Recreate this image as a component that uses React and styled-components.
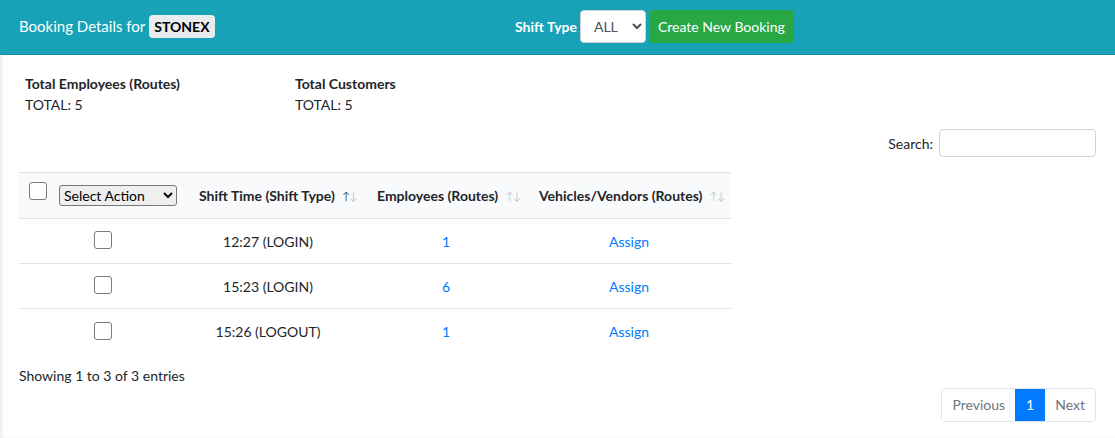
import styled, { createGlobalStyle } from "styled-components";

const GlobalStyle = createGlobalStyle`
  body {
    margin: 0;
    background: #fff;
    color: #212529;
    font-family: Lato, "Noto Sans", sans-serif;
  }
`;

const Header = styled.header`
  display: flex;
  align-items: center;
  height: 52px;
  padding: 0 0 2px 19px;
  background: #17a2b8;
  border-bottom: 1px solid #138d9f;
`;

const Title = styled.div`
  width: 496px;
  display: flex;
  align-items: center;
  gap: 4px;
  color: #fff;
  font-size: 15px;
`;

const Badge = styled.span`
  background: #e9ecef;
  color: #000;
  font-weight: 700;
  font-size: 14px;
  padding: 3px 5px;
  border-radius: 4px;
`;

const Controls = styled.div`
  display: flex;
  align-items: center;
  gap: 3px;
`;

const ControlLabel = styled.label`
  color: #fff;
  font-weight: 700;
  font-size: 14px;
`;

const ShiftSelect = styled.select`
  width: 66px;
  height: 33px;
  padding-left: 9px;
  border: 1px solid #ced4da;
  border-radius: 4px;
  background: #fff;
  color: #495057;
  font-family: inherit;
  font-size: 14px;
`;

const PrimaryButton = styled.button`
  height: 33px;
  padding: 0 9px;
  border: none;
  border-radius: 4px;
  background: #28a745;
  color: #fff;
  font-family: inherit;
  font-size: 14px;
`;

const Content = styled.main`
  padding: 18px 19px 16px;
  box-shadow: inset 3px 0 4px -2px rgba(0, 0, 0, 0.12);
`;

const Stats = styled.div`
  display: flex;
  padding-left: 6px;
`;

const Stat = styled.div`
  width: 270px;
  font-size: 14px;
  line-height: 21px;
`;

const StatTitle = styled.div`
  font-weight: 700;
`;

const SearchRow = styled.div`
  display: flex;
  justify-content: flex-end;
  align-items: center;
  gap: 6px;
  margin-top: 14px;
  font-size: 14px;
`;

const SearchInput = styled.input`
  box-sizing: border-box;
  width: 157px;
  height: 28px;
  border: 1px solid #ced4da;
  border-radius: 4px;
`;

const Table = styled.table`
  width: 712px;
  margin-top: 15px;
  table-layout: fixed;
  border-collapse: collapse;
  font-size: 14px;
`;

const HeadCell = styled.th`
  box-sizing: border-box;
  height: 46px;
  padding: 0 0 0 ${(p) => (p.$pl === undefined ? 12 : p.$pl)}px;
  width: ${(p) => p.$w}px;
  background: #f9fafb;
  border-top: 1px solid #dee2e6;
  border-bottom: 1px solid #dee2e6;
  text-align: left;
  font-weight: 700;
  white-space: nowrap;
`;

const HeadInner = styled.span`
  display: inline-flex;
  align-items: center;
  gap: 7px;
`;

const SortIcon = styled.span`
  font-size: 11px;
  font-weight: 400;
  letter-spacing: -1px;
  color: #c3ccd6;
  & b {
    font-weight: 400;
    color: ${(p) => (p.$active ? "#4f6278" : "#c3ccd6")};
  }
`;

const Cell = styled.td`
  box-sizing: border-box;
  height: 45px;
  padding: 0 ${(p) => p.$pr || 0}px 0 0;
  border-top: 1px solid #dee2e6;
  text-align: center;
`;

const Check = styled.input.attrs({ type: "checkbox" })`
  appearance: none;
  width: 18px;
  height: 18px;
  margin: ${(p) => (p.$lift ? "-9px 0 0" : "-5px 0 0")};
  border: 1px solid #7a7a80;
  border-radius: 3px;
  background: #fff;
  vertical-align: middle;
`;

const HeadTools = styled.div`
  display: flex;
  align-items: center;
  gap: 12px;
  padding-left: 10px;
`;

const ActionSelect = styled.select`
  width: 118px;
  height: 21px;
  border: 1px solid #767676;
  border-radius: 3px;
  background: #efefef;
  color: #000;
  font-family: inherit;
  font-size: 14px;
`;

const Link = styled.a`
  color: #007bff;
  text-decoration: none;
`;

const Info = styled.div`
  margin-top: 13px;
  font-size: 14px;
`;

const PagerRow = styled.div`
  display: flex;
  justify-content: flex-end;
  margin-top: 4px;
`;

const Pager = styled.ul`
  display: flex;
  margin: 0;
  padding: 0;
  list-style: none;
  border: 1px solid #dee2e6;
  border-radius: 4px;
  overflow: hidden;
`;

const PageItem = styled.li`
  height: 32px;
  display: flex;
  align-items: center;
  padding: 0 ${(p) => (p.$active ? 11 : 10)}px;
  font-size: 14px;
  color: ${(p) => (p.$active ? "#fff" : "#6c757d")};
  background: ${(p) => (p.$active ? "#007bff" : "#fff")};
`;

const rows = [
  { time: "12:27 (LOGIN)", emp: "1" },
  { time: "15:23 (LOGIN)", emp: "6" },
  { time: "15:26 (LOGOUT)", emp: "1" },
];

function Sort({ active }) {
  return (
    <SortIcon $active={active}>
      <b>↑</b>↓
    </SortIcon>
  );
}

export default function App() {
  return (
    <>
      <GlobalStyle />
      <Header>
        <Title>
          Booking Details for <Badge>STONEX</Badge>
        </Title>
        <Controls>
          <ControlLabel>Shift Type</ControlLabel>
          <ShiftSelect defaultValue="ALL">
            <option>ALL</option>
            <option>LOGIN</option>
            <option>LOGOUT</option>
          </ShiftSelect>
          <PrimaryButton>Create New Booking</PrimaryButton>
        </Controls>
      </Header>
      <Content>
        <Stats>
          <Stat>
            <StatTitle>Total Employees (Routes)</StatTitle>
            TOTAL: 5
          </Stat>
          <Stat>
            <StatTitle>Total Customers</StatTitle>
            TOTAL: 5
          </Stat>
        </Stats>
        <SearchRow>
          <label>Search:</label>
          <SearchInput />
        </SearchRow>
        <Table>
          <thead>
            <tr>
              <HeadCell $w={168} $pl={0}>
                <HeadTools>
                  <Check $lift />
                  <ActionSelect>
                    <option>Select Action</option>
                  </ActionSelect>
                </HeadTools>
              </HeadCell>
              <HeadCell $w={178}>
                <HeadInner>
                  Shift Time (Shift Type) <Sort active />
                </HeadInner>
              </HeadCell>
              <HeadCell $w={162}>
                <HeadInner>
                  Employees (Routes) <Sort />
                </HeadInner>
              </HeadCell>
              <HeadCell $w={204}>
                <HeadInner>
                  Vehicles/Vendors (Routes) <Sort />
                </HeadInner>
              </HeadCell>
            </tr>
          </thead>
          <tbody>
            {rows.map((r) => (
              <tr key={r.time}>
                <Cell>
                  <Check />
                </Cell>
                <Cell $pr={16}>{r.time}</Cell>
                <Cell>
                  <Link href="#">{r.emp}</Link>
                </Cell>
                <Cell>
                  <Link href="#">Assign</Link>
                </Cell>
              </tr>
            ))}
          </tbody>
        </Table>
        <Info>Showing 1 to 3 of 3 entries</Info>
        <PagerRow>
          <Pager>
            <PageItem>Previous</PageItem>
            <PageItem $active>1</PageItem>
            <PageItem>Next</PageItem>
          </Pager>
        </PagerRow>
      </Content>
    </>
  );
}
